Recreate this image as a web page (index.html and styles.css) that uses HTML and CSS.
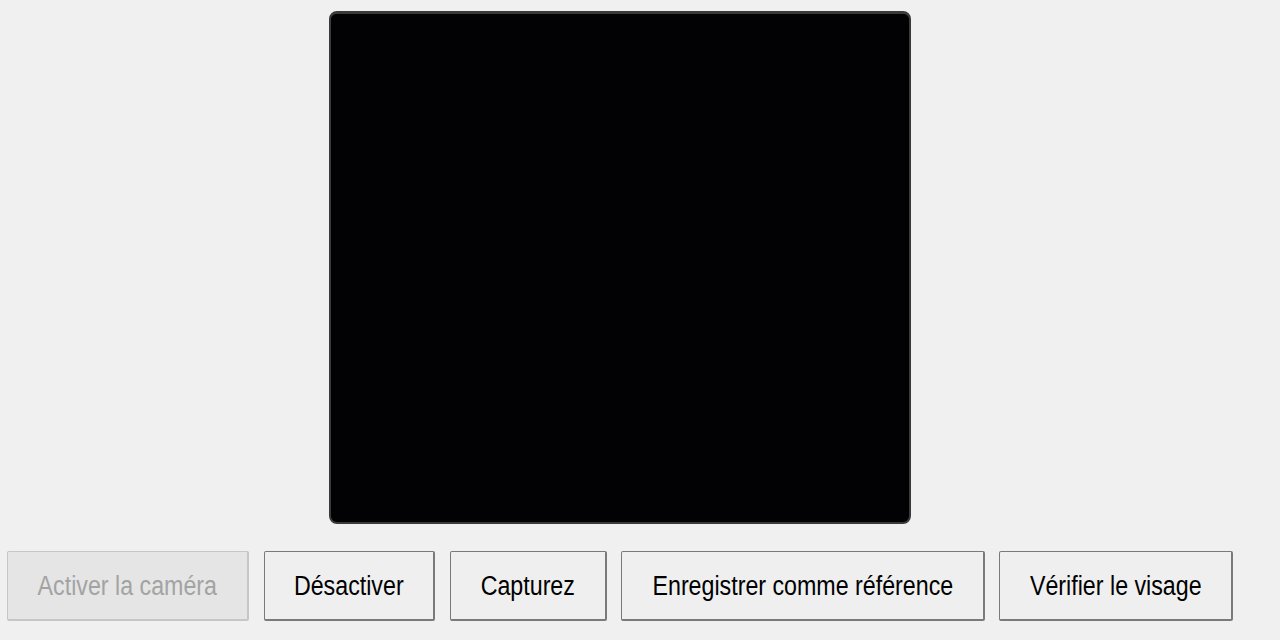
FILE: index.html
```html
<!DOCTYPE html>
<html lang="fr">
<head>
<meta charset="utf-8">
<title>Caméra</title>
<link rel="stylesheet" href="styles.css">
</head>
<body>
<main class="app">
  <div class="video"></div>
  <div class="controls">
    <button class="btn btn-1" disabled><span>Activer la caméra</span></button>
    <button class="btn btn-2"><span>Désactiver</span></button>
    <button class="btn btn-3"><span>Capturez</span></button>
    <button class="btn btn-4"><span>Enregistrer comme référence</span></button>
    <button class="btn btn-5"><span>Vérifier le visage</span></button>
  </div>
</main>
</body>
</html>
```
FILE: styles.css
```css
html, body {
  margin: 0;
  padding: 0;
  background: #f0f0f0;
  font-family: "Liberation Sans", Arial, sans-serif;
}
.app {
  padding-top: 11px;
  display: flex;
  flex-direction: column;
}
.video {
  margin-left: 329px;
  width: 582px;
  height: 513px;
  box-sizing: border-box;
  background: #020204;
  border: 2px solid #3a3a3a;
  border-top-width: 3px;
  border-radius: 8px;
}
.controls {
  margin-top: 27px;
  padding-left: 7px;
  display: flex;
  gap: 15px;
}
.btn {
  height: 70px;
  box-sizing: border-box;
  background: #efefef;
  border: solid #7a7a7a;
  border-width: 1px 2px 2px 1px;
  border-radius: 2px;
  padding: 0;
  display: flex;
  align-items: center;
  justify-content: center;
  font-family: "Liberation Sans", Arial, sans-serif;
  font-size: 27px;
  color: #000;
}
.btn span {
  display: inline-block;
  white-space: nowrap;
  transform: scaleX(0.86);
  margin-top: 2px;
}
.btn:disabled {
  background: #e5e5e5;
  border-color: #c6c6c6;
  color: #a3a3a3;
}
.btn-1 { width: 242px; }
.btn-2 { width: 171px; }
.btn-3 { width: 157px; }
.btn-4 { width: 364px; margin-left: -1px; }
.btn-5 { width: 234px; margin-left: -1px; }
```
